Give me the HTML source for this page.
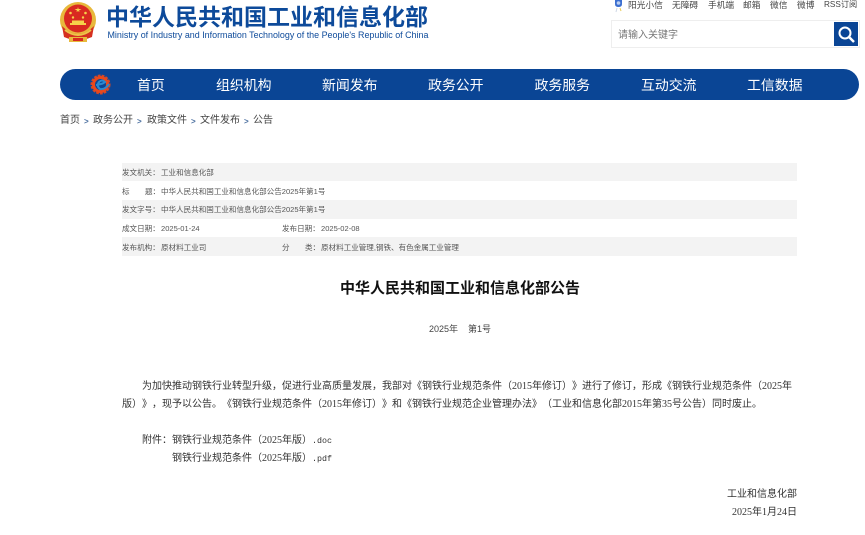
<!DOCTYPE html>
<html lang="zh"><head><meta charset="utf-8"><title>公告</title>
<style>
html,body{margin:0;padding:0;background:#fff;width:865px;height:535px;overflow:hidden}
body{position:relative;font-family:"Liberation Sans","Noto Sans CJK SC",sans-serif;color:#333;text-spacing-trim:space-all;filter:blur(.3px)}
.t{position:absolute;white-space:pre;line-height:1}
.n{color:#fff;font-size:13.9px;top:78.500px}
.tp{font-size:8.7px;top:1px;color:#444}
.b{position:absolute;left:122px;width:675px;background:#f3f3f3}
.m{font-size:7.55px;color:#555}
.s{font-family:"Liberation Serif","WenQuanYi Zen Hei","Noto Sans CJK SC",sans-serif;font-size:10px;color:#333}
.s i{font-style:normal;font-family:"Liberation Mono",monospace;font-size:8.33px}
.bc{font-size:10px;top:116px;color:#444}
.ar{font-size:8px;top:117.500px;color:#4a6f9f;font-weight:700}
</style></head><body>

<svg style="position:absolute;left:59px;top:2px" width="39" height="41" viewBox="0 0 39 41">
<circle cx="19" cy="18" r="18" fill="#e8b93c"/>
<circle cx="19" cy="16.5" r="14" fill="#d92a20"/>
<polygon points="19,5 20.5,10 15.5,7 22.5,7 17.5,10" fill="#f6d24a"/>
<circle cx="11.5" cy="11" r="1.3" fill="#f6d24a"/><circle cx="26.5" cy="11" r="1.3" fill="#f6d24a"/>
<circle cx="14" cy="15.5" r="1.2" fill="#f6d24a"/><circle cx="24" cy="15.5" r="1.2" fill="#f6d24a"/>
<rect x="11" y="21" width="16" height="2" fill="#f6d24a"/><rect x="13" y="18.500" width="12" height="2.500" fill="#f6d24a"/>
<path d="M3 24Q19 40 35 24L33 35Q19 41 5 35Z" fill="#d5301f"/>
<path d="M6 28Q19 38 32 28" stroke="#eec34a" stroke-width="2" fill="none"/>
<rect x="10" y="35" width="18" height="5" fill="#e8b93c"/>
<rect x="14" y="36" width="10" height="3" fill="#d92a20"/>
</svg>

<div class="t" style="left:106px;top:6px;font-size:23px;font-weight:700;color:#0d4a9a">中华人民共和国工业和信息化部</div>
<div class="t" style="left:107.500px;top:31px;font-size:8.93px;color:#0d4a9a">Ministry of Industry and Information Technology of the People's Republic of China</div>

<svg style="position:absolute;left:613px;top:0" width="11" height="13" viewBox="0 0 11 13">
<path d="M2 0H9V4Q9 7 5.500 7Q2 7 2 4Z" fill="#3c6fd0"/><circle cx="5.500" cy="3" r="1.800" fill="#bcd0f2"/>
<path d="M4 8L3 12" stroke="#cfd8e6" stroke-width="1"/><path d="M7 8L8 11" stroke="#e8c850" stroke-width="1"/>
</svg>
<div class="t tp" style="left:628px">阳光小信</div>
<div class="t tp" style="left:672px">无障碍</div>
<div class="t tp" style="left:708px">手机端</div>
<div class="t tp" style="left:743px">邮箱</div>
<div class="t tp" style="left:770px">微信</div>
<div class="t tp" style="left:797px">微博</div>
<div class="t tp" style="left:824px;font-size:8.2px;top:1.300px">RSS订阅</div>

<div style="position:absolute;left:611px;top:20px;width:247px;height:26px;border:1px solid #eee;background:#fff"></div>
<div class="t" style="left:618px;top:30.500px;font-size:10px;color:#777">请输入关键字</div>
<div style="position:absolute;left:834px;top:22px;width:24px;height:24px;background:#0a4595"></div>
<svg style="position:absolute;left:834px;top:22px" width="24" height="24" viewBox="0 0 24 24" fill="none" stroke="#fff" stroke-width="2"><circle cx="11" cy="11" r="5.500"/><path d="M15 15L20 20" stroke-width="2.500"/></svg>

<div style="position:absolute;left:60px;top:69px;width:799px;height:31px;background:#0a4595;border-radius:16px"></div>
<svg style="position:absolute;left:90px;top:74px" width="21" height="21" viewBox="0 0 21 21">
<circle cx="10.500" cy="10.500" r="8" fill="none" stroke="#e9481c" stroke-width="4" stroke-dasharray="2.500 1" opacity=".9"/>
<circle cx="10.500" cy="10.500" r="7" fill="none" stroke="#e9481c" stroke-width="3"/>
<path d="M6 11Q13 10 15 8Q12 5 9 8Q6 12 10 15Q15 16 19 10" fill="none" stroke="#2a8ad0" stroke-width="2"/>
</svg>
<div class="t n" style="left:137px">首页</div>
<div class="t n" style="left:216px">组织机构</div>
<div class="t n" style="left:322px">新闻发布</div>
<div class="t n" style="left:428px">政务公开</div>
<div class="t n" style="left:534.500px">政务服务</div>
<div class="t n" style="left:641px">互动交流</div>
<div class="t n" style="left:747px">工信数据</div>

<div class="t bc" style="left:60px">首页</div><div class="t ar" style="left:84px">&gt;</div>
<div class="t bc" style="left:93px">政务公开</div><div class="t ar" style="left:137px">&gt;</div>
<div class="t bc" style="left:147px">政策文件</div><div class="t ar" style="left:191px">&gt;</div>
<div class="t bc" style="left:200px">文件发布</div><div class="t ar" style="left:244px">&gt;</div>
<div class="t bc" style="left:253px">公告</div>

<div class="b" style="top:163px;height:18px"></div>
<div class="b" style="top:200px;height:19px"></div>
<div class="b" style="top:237px;height:19px"></div>

<div class="t m" style="left:122px;top:168.500px">发文机关：</div><div class="t m" style="left:161px;top:168.500px">工业和信息化部</div>
<div class="t m" style="left:122px;top:187.500px">标</div><div class="t m" style="left:145px;top:187.500px">题：</div><div class="t m" style="left:161px;top:187.500px">中华人民共和国工业和信息化部公告2025年第1号</div>
<div class="t m" style="left:122px;top:206px">发文字号：</div><div class="t m" style="left:161px;top:206px">中华人民共和国工业和信息化部公告2025年第1号</div>
<div class="t m" style="left:122px;top:224.500px">成文日期：</div><div class="t m" style="left:161px;top:224.500px">2025-01-24</div>
<div class="t m" style="left:282px;top:224.500px">发布日期：</div><div class="t m" style="left:321px;top:224.500px">2025-02-08</div>
<div class="t m" style="left:122px;top:243.500px">发布机构：</div><div class="t m" style="left:161px;top:243.500px">原材料工业司</div>
<div class="t m" style="left:282px;top:243.500px">分</div><div class="t m" style="left:305px;top:243.500px">类：</div><div class="t m" style="left:321px;top:243.500px">原材料工业管理,钢铁、有色金属工业管理</div>

<div class="t" style="left:340px;top:281px;font-size:15px;font-weight:700;color:#111">中华人民共和国工业和信息化部公告</div>
<div class="t" style="left:429px;top:325px;font-size:9px;color:#444">2025年</div>
<div class="t" style="left:468px;top:325px;font-size:9px;color:#444">第1号</div>

<div class="t s" style="left:142px;top:382px">为加快推动钢铁行业转型升级，促进行业高质量发展，我部对《钢铁行业规范条件（2015年修订）》进行了修订，形成《钢铁行业规范条件（2025年</div>
<div class="t s" style="left:122px;top:400px">版）》，现予以公告。《钢铁行业规范条件（2015年修订）》和《钢铁行业规范企业管理办法》（工业和信息化部2015年第35号公告）同时废止。</div>
<div class="t s" style="left:142px;top:436px">附件：钢铁行业规范条件（2025年版）<i>.doc</i></div>
<div class="t s" style="left:172px;top:454px">钢铁行业规范条件（2025年版）<i>.pdf</i></div>
<div class="t s" style="left:727px;top:490px">工业和信息化部</div>
<div class="t s" style="left:732px;top:508px">2025年1月24日</div>

</body></html>
